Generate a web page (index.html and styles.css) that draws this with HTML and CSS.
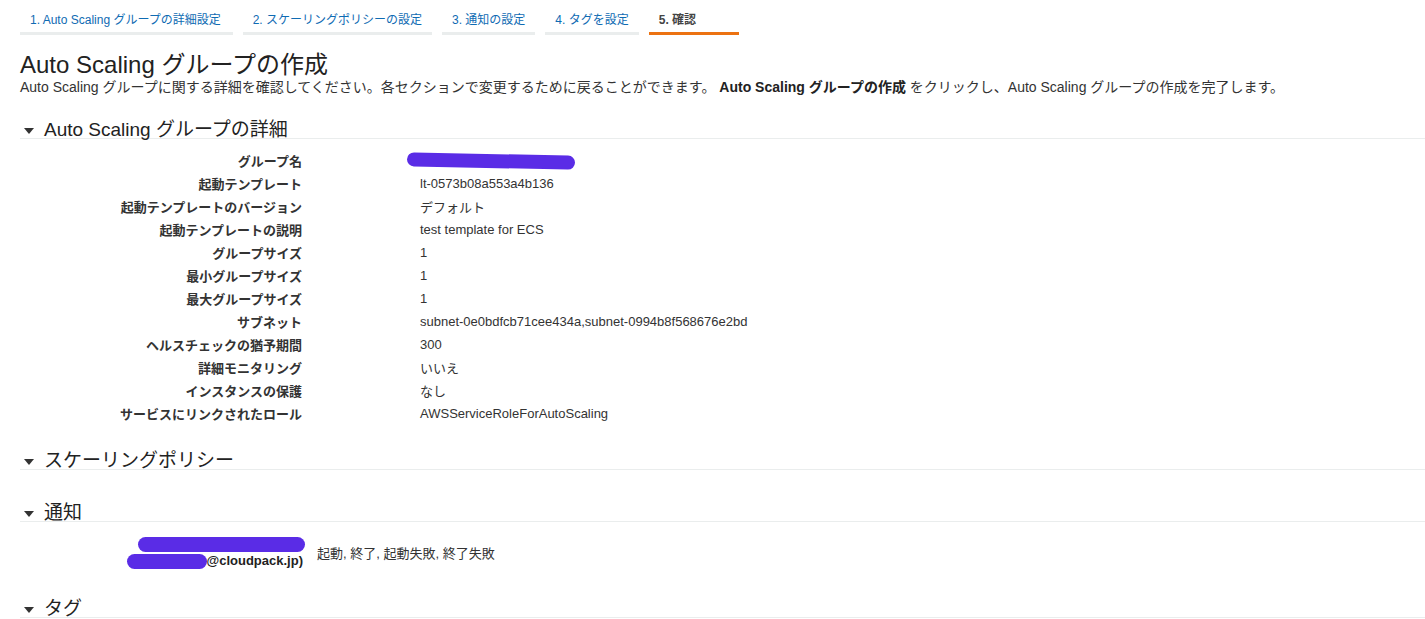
FILE: index.html
```html
<!DOCTYPE html>
<html lang="ja">
<head>
<meta charset="utf-8">
<title>Auto Scaling グループの作成</title>
<link rel="stylesheet" href="styles.css">
</head>
<body>
<div class="page">
  <nav class="tabs">
    <div class="tab tab-first">1. Auto Scaling グループの詳細設定</div>
    <div class="tab">2. スケーリングポリシーの設定</div>
    <div class="tab">3. 通知の設定</div>
    <div class="tab">4. タグを設定</div>
    <div class="tab active">5. 確認</div>
  </nav>

  <h1 class="title">Auto Scaling グループの作成</h1>
  <p class="desc">Auto Scaling グループに関する詳細を確認してください。各セクションで変更するために戻ることができます。 <b>Auto Scaling グループの作成</b> をクリックし、Auto Scaling グループの作成を完了します。</p>

  <section class="section">
    <h2 class="section-head"><span class="caret"></span>Auto Scaling グループの詳細</h2>
    <div class="section-body">
      <div class="grid">
        <div class="label">グループ名</div><div class="value"><span class="redact redact-name"></span></div>
        <div class="label">起動テンプレート</div><div class="value">lt-0573b08a553a4b136</div>
        <div class="label">起動テンプレートのバージョン</div><div class="value">デフォルト</div>
        <div class="label">起動テンプレートの説明</div><div class="value">test template for ECS</div>
        <div class="label">グループサイズ</div><div class="value">1</div>
        <div class="label">最小グループサイズ</div><div class="value">1</div>
        <div class="label">最大グループサイズ</div><div class="value">1</div>
        <div class="label">サブネット</div><div class="value">subnet-0e0bdfcb71cee434a,subnet-0994b8f568676e2bd</div>
        <div class="label">ヘルスチェックの猶予期間</div><div class="value">300</div>
        <div class="label">詳細モニタリング</div><div class="value">いいえ</div>
        <div class="label">インスタンスの保護</div><div class="value">なし</div>
        <div class="label">サービスにリンクされたロール</div><div class="value">AWSServiceRoleForAutoScaling</div>
      </div>
    </div>
  </section>

  <section class="section">
    <h2 class="section-head"><span class="caret"></span>スケーリングポリシー</h2>
    <div class="section-body empty"></div>
  </section>

  <section class="section">
    <h2 class="section-head"><span class="caret"></span>通知</h2>
    <div class="section-body">
      <div class="notify-row">
        <div class="notify-label">
          <div class="nl-line"><span class="redact redact-l1"></span></div>
          <div class="nl-line"><span class="redact redact-l2"></span>@cloudpack.jp)</div>
        </div>
        <div class="notify-value">起動, 終了, 起動失敗, 終了失敗</div>
      </div>
    </div>
  </section>

  <section class="section">
    <h2 class="section-head"><span class="caret"></span>タグ</h2>
  </section>
</div>
</body>
</html>
```
FILE: styles.css
```css
* { box-sizing: border-box; }
html, body { margin: 0; padding: 0; background: #fff; }
body {
  font-family: "Liberation Sans", Arial, "Noto Sans CJK JP", sans-serif;
  color: #333;
  overflow: hidden;
}
.page { padding: 8px 0 0 20px; }

.tabs { display: flex; gap: 10px; }
.tab {
  padding: 5px 10px 4px;
  line-height: 15px;
  font-size: 12px;
  color: #0f6bb3;
  border-bottom: 3px solid #eaeded;
  white-space: nowrap;
}
.tab-first { padding-right: 12px; }
.tab.active {
  color: #444;
  font-weight: bold;
  min-width: 90px;
  border-bottom-color: #ec7211;
}

.title {
  margin: 16px 0 0;
  font-size: 24px;
  line-height: 28px;
  font-weight: normal;
  color: #222;
}
.desc {
  margin: 0;
  font-size: 14px;
  line-height: 16px;
  color: #333;
  white-space: nowrap;
}
.desc b { color: #222; }

.section { margin-top: 23px; }
.section + .section { margin-top: 0; }
.section-head {
  margin: 0;
  height: 21px;
  padding-top: 4px;
  line-height: 16px;
  font-size: 19px;
  font-weight: normal;
  color: #222;
  border-bottom: 1px solid #eaeded;
  display: flex;
  align-items: center;
  white-space: nowrap;
}
.caret {
  display: inline-block;
  width: 0; height: 0;
  border-left: 5px solid transparent;
  border-right: 5px solid transparent;
  border-top: 6px solid #333;
  margin: 1px 10px 0 4px;
}
.section-body { padding: 10px 0 24px; }
.section-body.empty { padding: 7px 0 24px; }

.grid {
  display: grid;
  grid-template-columns: 282px 1fr;
  column-gap: 118px;
  grid-auto-rows: 23px;
  align-items: center;
  font-size: 13px;
}
.label { text-align: right; font-weight: bold; color: #333; white-space: nowrap; }
.value { color: #333; white-space: nowrap; }

.redact {
  display: inline-block;
  background: #5a2ce6;
  border-radius: 8px;
  vertical-align: middle;
}
.redact-name {
  width: 168px;
  height: 14px;
  margin-left: -13px;
  transform: rotate(1.2deg);
}

.notify-row {
  display: flex;
  align-items: center;
  padding: 3px 0 4px;
  font-size: 13px;
}
.notify-label {
  width: 283px;
  text-align: right;
  font-weight: bold;
  line-height: 17px;
  color: #222;
}
.nl-line { white-space: nowrap; }
.redact-l1 { width: 167px; height: 15px; margin-right: -2px; }
.redact-l2 { width: 80px; height: 15px; }
.notify-value { margin-left: 14px; color: #333; }
```
